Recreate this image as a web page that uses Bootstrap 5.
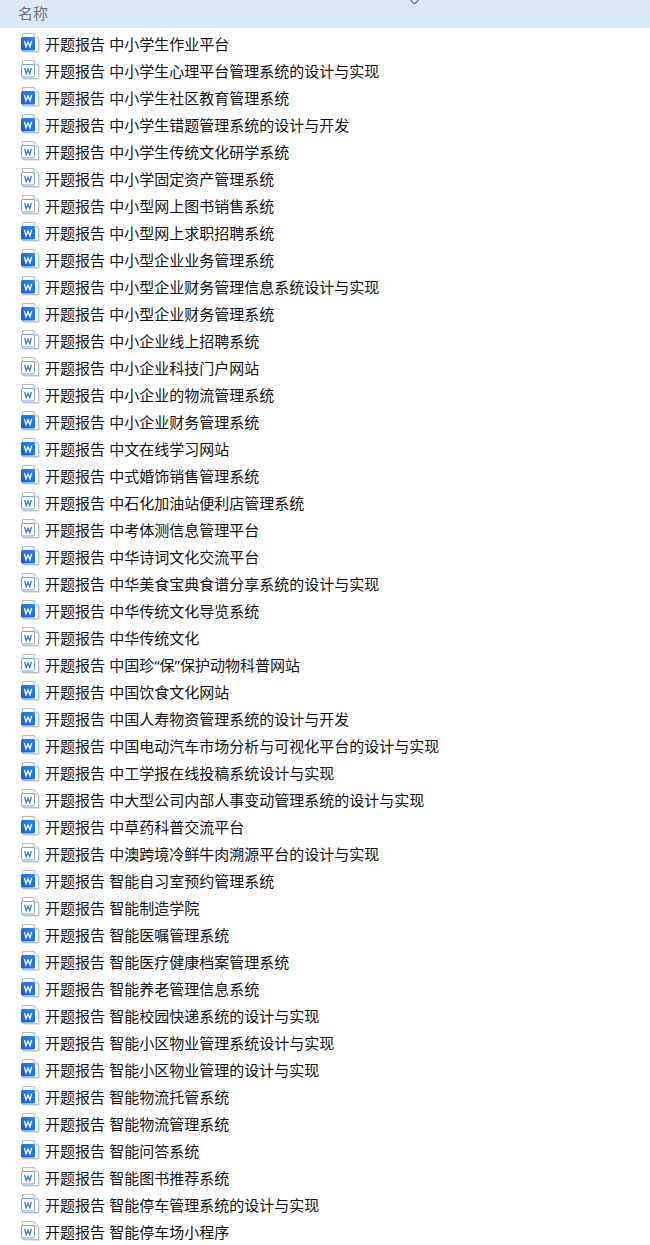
<!DOCTYPE html>
<html lang="zh-CN">
  <head>
    <meta charset="UTF-8" />
    <meta name="viewport" content="width=device-width, initial-scale=1.0" />
    <title>开题报告</title>
    <link
      href="https://cdn.jsdelivr.net/npm/bootstrap@5.3.0/dist/css/bootstrap.min.css"
      rel="stylesheet"
    />
    <style>
      body {
        font-family: "Noto Sans", "Noto Sans CJK SC", sans-serif;
        font-size: 15px;
        word-spacing: 0.3px;
        color: #111;
        background: #fff;
      }
      .head-bar {
        height: 28px;
        background: #d9e9f8;
        color: #6b7480;
        padding-left: 18px;
        line-height: 27px;
      }
      .sort-arrow {
        position: absolute;
        left: 410px;
        top: 0;
      }
      .file-list {
        padding-top: 2px;
      }
      .file-row {
        height: 27px;
        padding-left: 18px;
        line-height: 27px;
        white-space: nowrap;
      }
      .file-icon {
        width: 24px;
        height: 24px;
        margin-top: -1px;
        margin-right: 3px;
        flex: none;
      }
      .file-name {
        padding-top: 2px;
      }
    </style>
  </head>
  <body>
    <svg width="0" height="0" class="position-absolute">
      <defs>
        <linearGradient id="solid-fill" x1="1" y1="0" x2="0" y2="1">
          <stop offset="0" stop-color="#2a86f5" />
          <stop offset="1" stop-color="#0c5ce8" />
        </linearGradient>
        <symbol id="doc-base" viewBox="0 0 24 24">
          <path d="M4.5 2.5H16L20.5 7V20.5H4.5Z" fill="#fff" stroke="#bcbec1" />
          <path d="M16 2.5V7H20.5" fill="#eef0f2" stroke="#bcbec1" />
          <path d="M5 21.5H21.5V8" fill="none" stroke="#e4e5e6" />
        </symbol>
        <symbol id="doc-solid" viewBox="0 0 24 24">
          <use href="#doc-base" />
          <rect x="3" y="6" width="14" height="13.5" rx="1.5" fill="url(#solid-fill)" />
          <path d="M6.4 9.8 8 15.8 10 11 12 15.8 13.6 9.8" fill="none" stroke="#fff" stroke-width="1.3" />
        </symbol>
        <symbol id="doc-light" viewBox="0 0 24 24">
          <use href="#doc-base" />
          <rect x="3.5" y="6.5" width="13" height="12.5" rx="1.5" fill="#fff" stroke="#6ea2f5" />
          <path d="M6.6 9.8 8.2 15.6 10 11.2 11.8 15.6 13.4 9.8" fill="none" stroke="#2f78ee" stroke-width="1.3" />
        </symbol>
      </defs>
    </svg>

    <div class="head-bar position-relative">
      名称
      <svg class="sort-arrow" width="9" height="5" viewBox="0 0 9 5">
        <path d="M0.5 0 4.5 4 8.5 0" fill="none" stroke="#6f7478" stroke-width="1.2" />
      </svg>
    </div>

    <div class="file-list" id="file-list"></div>

    <script src="https://cdn.jsdelivr.net/npm/bootstrap@5.3.0/dist/js/bootstrap.bundle.min.js"></script>
    <script>
      // s = solid icon, l = light icon
      const files = [
        ["s", "中小学生作业平台"],
        ["l", "中小学生心理平台管理系统的设计与实现"],
        ["s", "中小学生社区教育管理系统"],
        ["s", "中小学生错题管理系统的设计与开发"],
        ["l", "中小学生传统文化研学系统"],
        ["l", "中小学固定资产管理系统"],
        ["l", "中小型网上图书销售系统"],
        ["s", "中小型网上求职招聘系统"],
        ["s", "中小型企业业务管理系统"],
        ["s", "中小型企业财务管理信息系统设计与实现"],
        ["s", "中小型企业财务管理系统"],
        ["l", "中小企业线上招聘系统"],
        ["l", "中小企业科技门户网站"],
        ["l", "中小企业的物流管理系统"],
        ["s", "中小企业财务管理系统"],
        ["s", "中文在线学习网站"],
        ["s", "中式婚饰销售管理系统"],
        ["l", "中石化加油站便利店管理系统"],
        ["l", "中考体测信息管理平台"],
        ["s", "中华诗词文化交流平台"],
        ["l", "中华美食宝典食谱分享系统的设计与实现"],
        ["s", "中华传统文化导览系统"],
        ["l", "中华传统文化"],
        ["l", "中国珍“保”保护动物科普网站"],
        ["s", "中国饮食文化网站"],
        ["s", "中国人寿物资管理系统的设计与开发"],
        ["s", "中国电动汽车市场分析与可视化平台的设计与实现"],
        ["s", "中工学报在线投稿系统设计与实现"],
        ["l", "中大型公司内部人事变动管理系统的设计与实现"],
        ["s", "中草药科普交流平台"],
        ["l", "中澳跨境冷鲜牛肉溯源平台的设计与实现"],
        ["s", "智能自习室预约管理系统"],
        ["l", "智能制造学院"],
        ["s", "智能医嘱管理系统"],
        ["s", "智能医疗健康档案管理系统"],
        ["s", "智能养老管理信息系统"],
        ["s", "智能校园快递系统的设计与实现"],
        ["s", "智能小区物业管理系统设计与实现"],
        ["s", "智能小区物业管理的设计与实现"],
        ["s", "智能物流托管系统"],
        ["s", "智能物流管理系统"],
        ["s", "智能问答系统"],
        ["l", "智能图书推荐系统"],
        ["l", "智能停车管理系统的设计与实现"],
        ["l", "智能停车场小程序"],
      ];

      const list = document.getElementById("file-list");
      files.forEach(([kind, name]) => {
        const row = document.createElement("div");
        row.className = "file-row d-flex align-items-center";
        row.innerHTML = `
          <svg class="file-icon"><use href="#doc-${kind === "s" ? "solid" : "light"}" /></svg>
          <span class="file-name">开题报告 ${name}</span>
        `;
        list.appendChild(row);
      });
    </script>
  </body>
</html>
